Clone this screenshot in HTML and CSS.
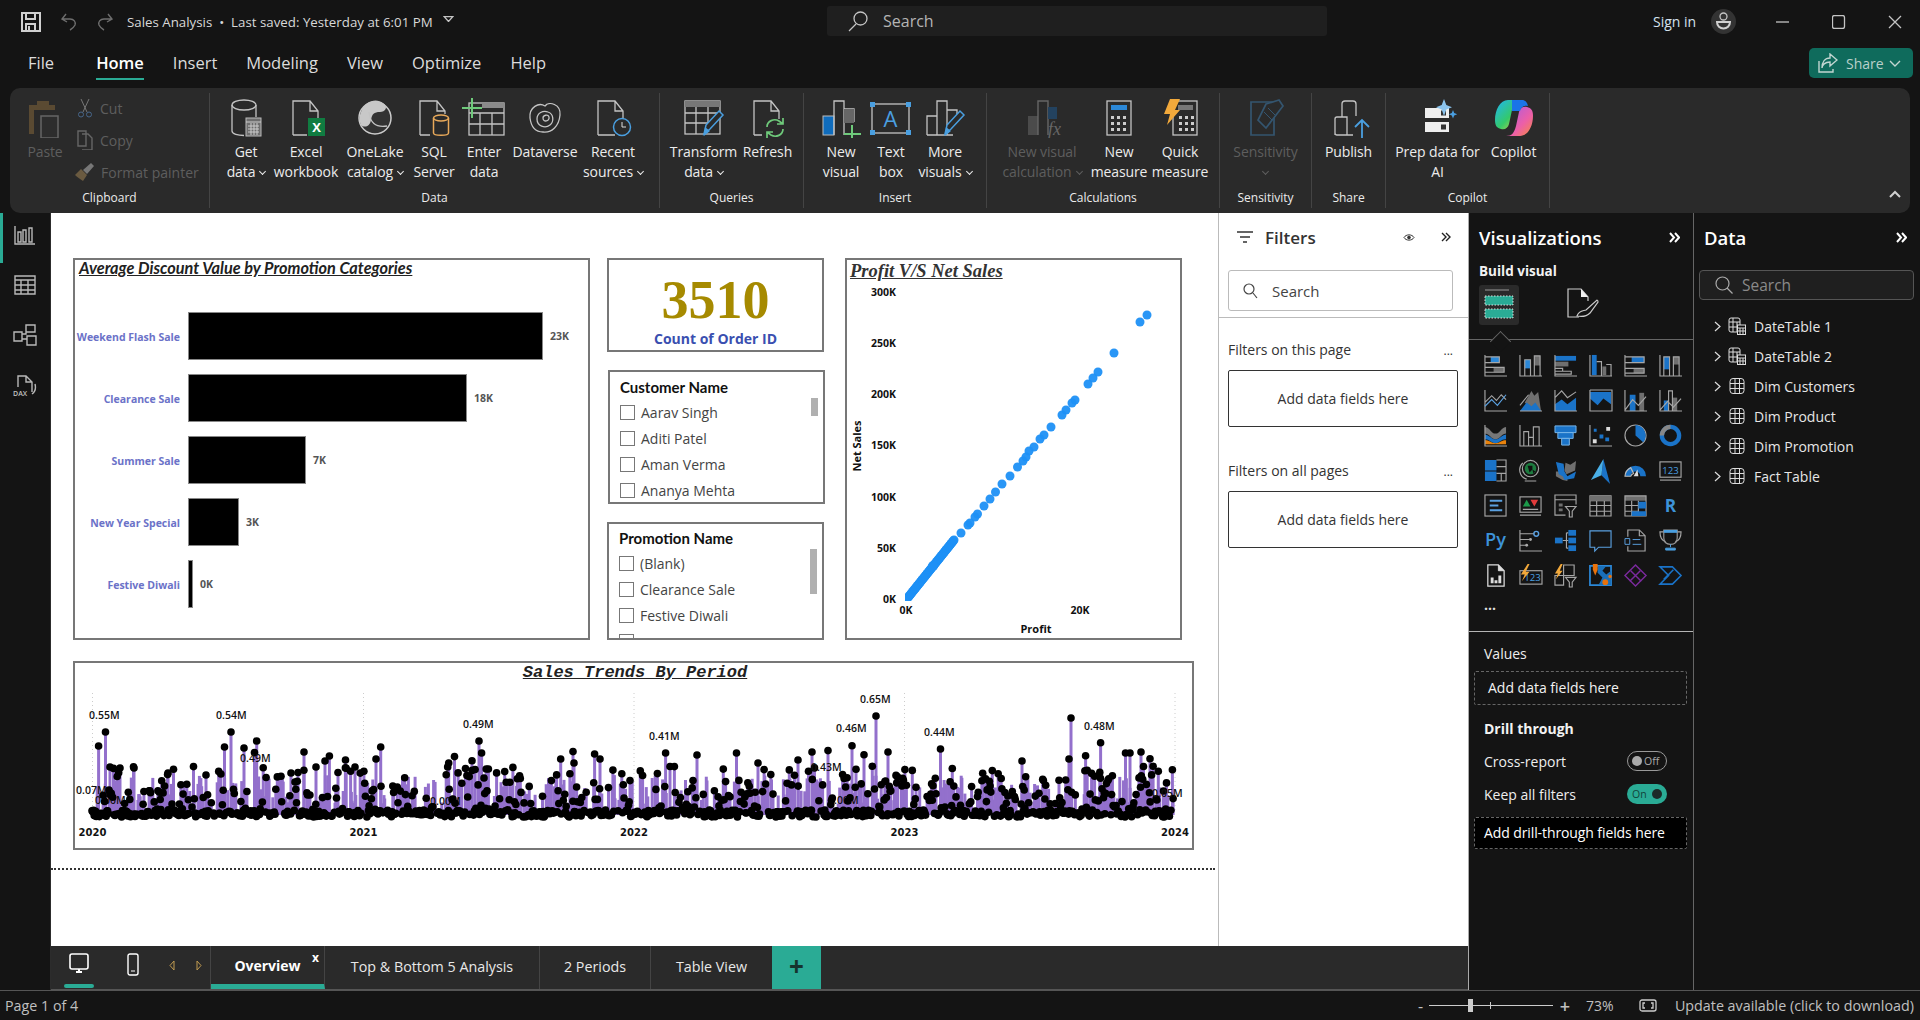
FILE: index.html
```html
<!DOCTYPE html>
<html lang="en">
<head>
<meta charset="utf-8">
<title>Sales Analysis</title>
<link rel="stylesheet" href="styles.css">
</head>
<body>
<header class="titlebar">
  <div class="title-left">
    <svg class="ti save" width="20" height="20" viewBox="0 0 20 20"><path class="s2" d="M1 1h18v18H1zM5 1v6h9V1M5 19v-7h9v7M8 14v5"/></svg>
    <svg class="ti undo" width="17" height="18" viewBox="0 0 17 18"><path class="dim" d="M6 1 2 6l5 3M2 6h8c4 0 6 3 5 6-1 2-3 4-5 5"/></svg>
    <svg class="ti redo" width="17" height="18" viewBox="0 0 17 18"><path class="dim" d="m11 1 4 5-5 3M15 6H7C3 6 1 9 2 12c1 2 3 4 5 5"/></svg>
    <span class="doc-title">Sales Analysis&nbsp; •&nbsp; Last saved: Yesterday at 6:01 PM</span>
    <svg class="ti tri" width="11" height="6" viewBox="0 0 11 6"><path class="s1" d="M1 .5h9L5.500 5.500z"/></svg>
  </div>
  <div class="top-search">
    <svg width="20" height="21" viewBox="0 0 20 21"><circle class="s1" cx="12.500" cy="7.500" r="6.500"/><path class="s1" d="M8 13 1 20"/></svg>
    <span>Search</span>
  </div>
  <div class="title-right">
    <span class="signin">Sign in</span>
    <svg class="avatar" width="25" height="25" viewBox="0 0 25 25"><circle cx="12.500" cy="12.500" r="12.500" fill="#333"/><circle class="s1" cx="12.500" cy="7.500" r="3.500"/><path class="s2" d="M6 13h13c0 4-3 6.500-6.500 6.500S6 17 6 13z"/></svg>
    <div class="winctl">
      <svg width="14" height="14" viewBox="0 0 14 14"><path class="s1" d="M0 7h13"/></svg>
      <svg width="14" height="14" viewBox="0 0 14 14"><rect class="s1" x=".5" y=".5" width="12" height="13" rx="2"/></svg>
      <svg width="14" height="14" viewBox="0 0 14 14"><path class="s1" d="m1 1 12 12M13 1 1 13"/></svg>
    </div>
  </div>
</header>

<nav class="menubar">
  <div class="menus">
    <span class="menu m-file">File</span>
    <span class="menu m-home">Home</span>
    <span class="menu">Insert</span>
    <span class="menu">Modeling</span>
    <span class="menu">View</span>
    <span class="menu">Optimize</span>
    <span class="menu">Help</span>
  </div>
  <button class="share">
    <svg width="20" height="20" viewBox="0 0 20 20"><path class="sh" d="M12 1l7 6-7 6V9C7 9 4 12 4 15c0-6 3-10 8-10zM1 8v11h14v-3"/></svg>
    <span>Share</span>
    <svg width="12" height="7" viewBox="0 0 12 7"><path class="sh" d="m1 1 5 5 5-5"/></svg>
  </button>
</nav>

<section class="ribbon">
  <div class="rgroup g-clip">
    <div class="ritems clip-items">
      <div class="ritem w-paste disabled">
        <svg width="40" height="40" viewBox="0 0 40 40"><path d="M4 7h8V3h12v4h6v5H9v24H4z" fill="#5a4a32"/><rect x="16" y="18" width="17" height="22" fill="#2d2d2d" stroke="#666" stroke-width="1.500"/></svg>
        <span class="rtext">Paste</span>
      </div>
      <ul class="clip-list">
        <li><svg width="16" height="20" viewBox="0 0 16 20"><path d="m4 1 6 13M12 1 6 14" stroke="#777" fill="none"/><circle cx="4" cy="16.500" r="2.500" fill="none" stroke="#47668a"/><circle cx="12" cy="16.500" r="2.500" fill="none" stroke="#47668a"/></svg><span>Cut</span></li>
        <li><svg width="16" height="20" viewBox="0 0 16 20"><path class="d" d="M1 1h8v15H1zM5 4h6l4 4v12H5"/></svg><span>Copy</span></li>
        <li><svg width="22" height="20" viewBox="0 0 22 20"><path d="M1 13l6-6 6 6-4 6c-3-2-6-4-8-6z" fill="#6a5a40"/><path d="m9 8 4 4 7-8-3-3z" fill="#777"/></svg><span>Format painter</span></li>
      </ul>
    </div>
    <div class="rlabel">Clipboard</div>
  </div>

  <div class="rgroup g-data">
    <div class="ritems data-items">
      <div class="ritem w56">
        <svg width="44" height="40" viewBox="0 0 44 40"><ellipse class="s" cx="20" cy="7" rx="12" ry="5"/><path class="s" d="M8 7v26c0 3 6 4.500 12 4.500M32 7v12"/><rect x="22" y="20" width="15" height="18" fill="#6e6e6e" stroke="#bbb"/><path d="M22 24h15M24 28h11M24 31h11M24 34h11M27 25v12M30 25v12M33 25v12" stroke="#ccc" fill="none"/></svg>
        <span class="rtext">Get<br>data<i class="car"></i></span>
      </div>
      <div class="ritem w64">
        <svg width="44" height="40" viewBox="0 0 44 40"><path class="s" d="M9 37V3h17l8 10v12M26 3v10h8M9 37h14"/><rect x="24" y="20" width="17" height="18" fill="#107c41"/><text x="32.500" y="34" class="xl">X</text></svg>
        <span class="rtext">Excel<br>workbook</span>
      </div>
      <div class="ritem w74">
        <svg width="44" height="40" viewBox="0 0 44 40"><circle cx="22" cy="20" r="16" fill="#333" stroke="#ccc" stroke-width="1.500"/><path d="M8 14C12 2 24 0 30 5c6 4 2 9-3 9-6 0-8 2-9 8-1 7-7 8-10 5-2-4-2-9 0-13z" fill="#c8c8c8"/><path d="M16 14c1 10 6 16 18 14" class="s"/></svg>
        <span class="rtext">OneLake<br>catalog<i class="car"></i></span>
      </div>
      <div class="ritem w44">
        <svg width="44" height="40" viewBox="0 0 44 40"><path class="s" d="M8 37V3h17l8 10v3M25 3v10h8M8 37h10"/><ellipse cx="29" cy="20" rx="7.500" ry="3" fill="none" stroke="#e8a95a" stroke-width="1.500"/><path d="M21.500 20v15c0 3 15 3 15 0V20" fill="none" stroke="#e8a95a" stroke-width="1.500"/></svg>
        <span class="rtext">SQL<br>Server</span>
      </div>
      <div class="ritem w56">
        <svg width="44" height="40" viewBox="0 0 44 40"><rect class="s" x="7" y="5" width="35" height="32"/><path class="s" d="M7 15h35M7 26h35M18 15v22M30 15v22"/><rect x="20" y="5" width="22" height="5" fill="#8a8a8a"/><path d="M0 10h20M10 0v20" stroke="#6fca7b" stroke-width="2" fill="none"/></svg>
        <span class="rtext">Enter<br>data</span>
      </div>
      <div class="ritem w66">
        <svg width="44" height="40" viewBox="0 0 44 40"><path class="s" d="M7 20C6 9 16 4 22 8c4-5 16-2 15 9-1 11-8 18-17 17-8 0-12-6-13-14z"/><path class="s" d="M14 21c0-6 6-9 11-7 6 2 6 10 2 13-5 4-13 1-13-6z"/><path class="s" d="M20 20c0-3 5-4 6-1 1 4-6 6-6 1z"/></svg>
        <span class="rtext">Dataverse</span>
      </div>
      <div class="ritem w70">
        <svg width="44" height="40" viewBox="0 0 44 40"><path class="s" d="M7 37V3h17l8 10v8M24 3v10h8M7 37h17"/><circle cx="31" cy="29" r="8.500" fill="#2a2a2a" stroke="#4a9fe0" stroke-width="1.500"/><path d="M31 24v5h4" stroke="#ddd" fill="none"/></svg>
        <span class="rtext">Recent<br>sources<i class="car"></i></span>
      </div>
    </div>
    <div class="rlabel">Data</div>
  </div>

  <div class="rgroup g-query">
    <div class="ritems">
      <div class="ritem w72">
        <svg width="44" height="40" viewBox="0 0 44 40"><rect class="s" x="3" y="3" width="35" height="33"/><rect x="3" y="3" width="35" height="6" fill="#777"/><path class="s" d="M3 15h35M3 25h24M14 9v27M26 9v20"/><path d="m22 36 2-9 13-14 4 4-13 14z" fill="#2a2a2a" stroke="#4a9fe0" stroke-width="1.500"/><path d="m22 38 1-9 5 4z" fill="#4a9fe0"/></svg>
        <span class="rtext">Transform<br>data<i class="car"></i></span>
      </div>
      <div class="ritem w56">
        <svg width="44" height="40" viewBox="0 0 44 40"><path class="s" d="M8 37V3h17l8 10v8M25 3v10h8M8 37h8"/><path d="M21 29c0-6 7-9 12-6l4 3M37 20v6h-6M37 31c0 6-7 9-12 6l-4-3M21 40v-6h6" fill="none" stroke="#6fca7b" stroke-width="1.700"/></svg>
        <span class="rtext">Refresh</span>
      </div>
    </div>
    <div class="rlabel">Queries</div>
  </div>

  <div class="rgroup g-insert">
    <div class="ritems">
      <div class="ritem w52">
        <svg width="44" height="40" viewBox="0 0 44 40"><rect x="4" y="18" width="11" height="19" fill="#0f6cbd" stroke="#bbb"/><path class="s" d="M15 37V3h10v34M25 11h10v13"/><rect x="25" y="11" width="10" height="14" fill="#666"/><path d="M25 36h17M33 27v15" stroke="#6fca7b" stroke-width="2" fill="none"/></svg>
        <span class="rtext">New<br>visual</span>
      </div>
      <div class="ritem w48">
        <svg width="44" height="40" viewBox="0 0 44 40"><rect class="s" x="3" y="6" width="37" height="29"/><text x="21.500" y="29" class="abox">A</text><path d="M1 4h5v5H1zM37 4h5v5h-5zM1 32h5v5H1zM37 32h5v5h-5z" fill="#4a9fe0"/></svg>
        <span class="rtext">Text<br>box</span>
      </div>
      <div class="ritem w60">
        <svg width="44" height="40" viewBox="0 0 44 40"><path class="s" d="M4 37V18h10M14 37V3h10v34M4 37h26M24 12h10v6"/><path d="m22 36 2-9 13-14 4 4-13 14z" fill="#2a2a2a" stroke="#4a9fe0" stroke-width="1.500"/><path d="m22 38 1-9 5 4z" fill="#4a9fe0"/></svg>
        <span class="rtext">More<br>visuals<i class="car"></i></span>
      </div>
    </div>
    <div class="rlabel">Insert</div>
  </div>

  <div class="rgroup g-calc">
    <div class="ritems">
      <div class="ritem w90 disabled">
        <svg width="44" height="40" viewBox="0 0 44 40"><rect x="8" y="18" width="10" height="19" fill="#4b4b4b"/><path class="d" d="M18 37V3h10v34"/><rect x="28" y="9" width="9" height="12" fill="#23425f"/><text x="28" y="37" class="fx">fx</text></svg>
        <span class="rtext">New visual<br>calculation<i class="car"></i></span>
      </div>
      <div class="ritem w64">
        <svg width="44" height="40" viewBox="0 0 44 40"><rect class="s" x="10" y="3" width="24" height="34"/><rect x="14" y="7" width="16" height="5" fill="#2b88d8"/><path d="M14 18h3v3h-3zM20 18h3v3h-3zM26 18h3v3h-3zM14 24h3v3h-3zM20 24h3v3h-3zM26 24h3v3h-3zM14 30h3v3h-3zM20 30h3v3h-3zM26 30h3v3h-3z" fill="#ccc"/></svg>
        <span class="rtext">New<br>measure</span>
      </div>
      <div class="ritem w58">
        <svg width="44" height="40" viewBox="0 0 44 40"><rect class="s" x="15" y="3" width="24" height="34"/><rect x="20" y="7" width="15" height="5" fill="#777"/><path d="M21 18h3v3h-3zM27 18h3v3h-3zM33 18h3v3h-3zM21 24h3v3h-3zM27 24h3v3h-3zM33 24h3v3h-3zM21 30h3v3h-3zM27 30h3v3h-3zM33 30h3v3h-3z" fill="#ccc"/><path d="M12 1h10l-5 11h5L9 27l3-11H6z" fill="#f2a93b"/></svg>
        <span class="rtext">Quick<br>measure</span>
      </div>
    </div>
    <div class="rlabel">Calculations</div>
  </div>

  <div class="rgroup g-sens">
    <div class="ritems">
      <div class="ritem wfull disabled">
        <svg width="44" height="40" viewBox="0 0 44 40"><path d="M7 4h23v33H7z" fill="none" stroke="#34556f" stroke-width="1.700"/><path d="M22 6 35 2l4 6-17 22-8-8z" fill="#2a2a2a" stroke="#34556f" stroke-width="1.700"/><path d="m20 14 8 8M24 10l8 8" stroke="#34556f" fill="none"/></svg>
        <span class="rtext">Sensitivity<br><i class="car solo"></i></span>
      </div>
    </div>
    <div class="rlabel">Sensitivity</div>
  </div>

  <div class="rgroup g-share">
    <div class="ritems">
      <div class="ritem wfull">
        <svg width="44" height="40" viewBox="0 0 44 40"><path class="s" d="M8 37V21a2 2 0 0 1 2-2h5V6a3 3 0 0 1 3-3h8a3 3 0 0 1 3 3v12M15 19h5v18H10a2 2 0 0 1-2-2M20 25v12h6"/><path d="M35 40V22M28 29l7-7 7 7" stroke="#4a9fe0" stroke-width="1.800" fill="none"/></svg>
        <span class="rtext">Publish</span>
      </div>
    </div>
    <div class="rlabel">Share</div>
  </div>

  <div class="rgroup g-copilot">
    <div class="ritems">
      <div class="ritem w-prep">
        <svg width="44" height="40" viewBox="0 0 44 40"><rect x="9" y="10" width="24" height="10" fill="#eee"/><rect x="25" y="12.500" width="5" height="5" fill="#333"/><rect x="9" y="24" width="24" height="10" fill="#eee"/><rect x="25" y="26.500" width="5" height="5" fill="#333"/><path d="m28 1 2.300 6L36 9.300l-5.700 2.300L28 18l-2.300-6.400L20 9.300 25.700 7z" fill="#8bc4ee"/><path d="m37 12 1.200 3 3 1.200-3 1.200-1.200 3-1.200-3-3-1.200 3-1.200z" fill="#4a9fe0"/></svg>
        <span class="rtext">Prep data for<br>AI</span>
      </div>
      <div class="ritem w-copilot">
        <svg width="44" height="40" viewBox="0 0 44 40">
          <defs>
            <linearGradient id="cpa" x1="0" y1="0" x2="1" y2="1"><stop offset="0" stop-color="#1fb6f6"/><stop offset=".55" stop-color="#34c96a"/><stop offset="1" stop-color="#f2d23a"/></linearGradient>
            <linearGradient id="cpb" x1="0" y1="0" x2="1" y2="1"><stop offset="0" stop-color="#a35be8"/><stop offset=".6" stop-color="#ec5fa8"/><stop offset="1" stop-color="#f7893f"/></linearGradient>
          </defs>
          <path d="M16 2h14c-6 0-8 3-10 10l-3 14c-1 4-4 6-8 5-4-1-6-3-6-9C3 12 8 2 16 2z" fill="url(#cpa)"/>
          <path d="M28 38H14c6 0 8-3 10-10l3-14c1-4 4-6 8-5 4 1 6 3 6 9 0 10-5 20-13 20z" fill="url(#cpb)"/>
          <path d="M20 2h10c3 0 5 2 6 6-4-1-7 1-8 5h-8c0-5 0-8 0-11z" fill="#1a74e8"/>
        </svg>
        <span class="rtext">Copilot</span>
      </div>
    </div>
    <div class="rlabel">Copilot</div>
  </div>
  <svg class="collapse" width="12" height="8" viewBox="0 0 12 8"><path class="s2" d="m1 7 5-5 5 5"/></svg>
</section>

<main class="workspace">
  <aside class="rail">
    <svg width="22" height="20" viewBox="0 0 22 20"><path class="rs" d="M1 0v18h20M4 6h3v10H4zM9 4h3v12H9zM15 2h3v14h-3z"/></svg>
    <svg width="22" height="20" viewBox="0 0 22 20"><path class="rs" d="M1 1h20v18H1zM1 5h20M1 10h20M1 15h20M7 5v14M14 5v14"/></svg>
    <svg width="24" height="22" viewBox="0 0 24 22"><path class="rs" d="M1 8h8v9H1zM13 1h9v7h-9zM14 12h9v9h-9zM9 10h4V4M9 15h5"/></svg>
    <svg width="24" height="22" viewBox="0 0 24 22"><path class="rs" d="M5 12V1h8l6 6v10M13 1v6h6M22 9c1 4 0 8-3 10"/><text x="0" y="21" class="dax">DAX</text></svg>
  </aside>

  <div class="center">
    <div class="center-top">
      <div class="canvas">
        <div class="row-top">
          <article class="card bars">
            <h3 class="t-bars">Average Discount Value by Promotion Categories</h3>
            <div class="barlist">
              <div class="barrow"><span class="blabel">Weekend Flash Sale</span><span class="bar" style="width:355px"></span><span class="bval">23K</span></div>
              <div class="barrow"><span class="blabel">Clearance Sale</span><span class="bar" style="width:279px"></span><span class="bval">18K</span></div>
              <div class="barrow"><span class="blabel">Summer Sale</span><span class="bar" style="width:118px"></span><span class="bval">7K</span></div>
              <div class="barrow"><span class="blabel">New Year Special</span><span class="bar" style="width:51px"></span><span class="bval">3K</span></div>
              <div class="barrow"><span class="blabel">Festive Diwali</span><span class="bar" style="width:5px"></span><span class="bval">0K</span></div>
            </div>
          </article>
          <div class="midcol">
            <article class="card kpi">
              <div class="kpi-num">3510</div>
              <div class="kpi-label">Count of Order ID</div>
            </article>
            <article class="card slicer s-cust">
              <h4>Customer Name</h4>
              <ul>
                <li><i class="cb"></i>Aarav Singh</li>
                <li><i class="cb"></i>Aditi Patel</li>
                <li><i class="cb"></i>Aman Verma</li>
                <li><i class="cb"></i>Ananya Mehta</li>
              </ul>
              <span class="thumb th-cust"></span>
            </article>
            <article class="card slicer s-promo">
              <h4>Promotion Name</h4>
              <ul>
                <li><i class="cb"></i>(Blank)</li>
                <li><i class="cb"></i>Clearance Sale</li>
                <li><i class="cb"></i>Festive Diwali</li>
                <li><i class="cb"></i></li>
              </ul>
              <span class="thumb th-promo"></span>
            </article>
          </div>
          <article class="card scatter">
            <h3 class="t-scatter">Profit V/S Net Sales</h3>
            <svg class="chart" width="333" height="356" viewBox="847 282 333 356">
              <defs><clipPath id="plot"><rect x="905" y="290" width="270" height="311"/></clipPath></defs>
              <g class="axis">
                <text x="896" y="296" text-anchor="end">300K</text>
                <text x="896" y="347" text-anchor="end">250K</text>
                <text x="896" y="398" text-anchor="end">200K</text>
                <text x="896" y="449" text-anchor="end">150K</text>
                <text x="896" y="501" text-anchor="end">100K</text>
                <text x="896" y="552" text-anchor="end">50K</text>
                <text x="896" y="603" text-anchor="end">0K</text>
                <text x="906" y="614" text-anchor="middle">0K</text>
                <text x="1080" y="614" text-anchor="middle">20K</text>
              </g>
              <text class="axt" x="1036" y="633" text-anchor="middle">Profit</text>
              <text class="axt" transform="translate(861 446) rotate(-90)" text-anchor="middle">Net Sales</text>
              <g id="scatter-dots" class="sdots" clip-path="url(#plot)"></g>
            </svg>
          </article>
        </div>
        <article class="card trend">
          <h3 class="t-trend">Sales Trends By Period</h3>
          <svg class="chart" width="1117" height="163" viewBox="75 685 1117 163">
            <g class="grid">
              <path d="M92.500 693V812M363.500 693V812M634 693V812M904.500 693V812M1175 693V812"/>
            </g>
            <g id="trend-stems" class="stems"></g>
            <g class="tlabels">
              <text x="76" y="794">0.07M</text>
              <text x="95" y="804">0.00M</text>
              <text x="430" y="805">0.00M</text>
              <text x="828" y="804">0.00M</text>
            </g>
            <g id="trend-dots"></g>
            <g class="tlabels">
              <text x="89" y="719">0.55M</text>
              <text x="216" y="719">0.54M</text>
              <text x="240" y="762">0.49M</text>
              <text x="463" y="728">0.49M</text>
              <text x="649" y="740">0.41M</text>
              <text x="836" y="732">0.46M</text>
              <text x="860" y="703">0.65M</text>
              <text x="811" y="771">0.43M</text>
              <text x="924" y="736">0.44M</text>
              <text x="1084" y="730">0.48M</text>
              <text x="1152" y="797">0.05M</text>
            </g>
            <g class="years">
              <text x="92.500" y="836" text-anchor="middle">2020</text>
              <text x="363.500" y="836" text-anchor="middle">2021</text>
              <text x="634" y="836" text-anchor="middle">2022</text>
              <text x="904.500" y="836" text-anchor="middle">2023</text>
              <text x="1175" y="836" text-anchor="middle">2024</text>
            </g>
          </svg>
        </article>
        <div class="pageline"></div>
      </div>

      <aside class="filters">
        <div class="f-head">
          <svg width="16" height="12" viewBox="0 0 16 12"><path d="M0 1h16M3 6h10M6 11h4" stroke="#333" stroke-width="1.500" fill="none"/></svg>
          <span class="f-title">Filters</span>
          <svg class="f-eye" width="12" height="9" viewBox="0 0 12 9"><path d="M1 4.500C3 1 9 1 11 4.500 9 8 3 8 1 4.500z" fill="none" stroke="#333"/><circle cx="6" cy="4.500" r="1.800" fill="#333"/></svg>
          <svg class="f-chev" width="10" height="10" viewBox="0 0 10 10"><path d="m1 1 4 4-4 4M5 1l4 4-4 4" fill="none" stroke="#222" stroke-width="1.400"/></svg>
        </div>
        <div class="f-search">
          <svg width="15" height="16" viewBox="0 0 15 16"><circle cx="6" cy="6" r="5" fill="none" stroke="#444" stroke-width="1.200"/><path d="m10 10 4 5" stroke="#444" stroke-width="1.200"/></svg>
          <span>Search</span>
        </div>
        <div class="f-section">
          <div class="f-row"><span>Filters on this page</span><span class="more">...</span></div>
          <div class="f-drop">Add data fields here</div>
          <div class="f-row f-row2"><span>Filters on all pages</span><span class="more">...</span></div>
          <div class="f-drop">Add data fields here</div>
        </div>
      </aside>
    </div>

    <div class="tabs">
      <div class="tab-tools">
        <div class="device on">
          <svg width="20" height="21" viewBox="0 0 20 21"><rect x="1" y="1" width="18" height="15" rx="2" fill="none" stroke="#fff" stroke-width="1.600"/><path d="M7 19h6M10 16v3" stroke="#fff" stroke-width="2" fill="none"/></svg>
        </div>
        <div class="device">
          <svg width="12" height="23" viewBox="0 0 12 23"><rect x="1" y="1" width="10" height="21" rx="2" fill="none" stroke="#fff" stroke-width="1.400"/><path d="M4 18h4" stroke="#fff"/></svg>
        </div>
        <svg class="nav-arrow" width="6" height="11" viewBox="0 0 6 11"><path d="M5 1 1 5.500 5 10z" fill="none" stroke="#c09a50"/></svg>
        <svg class="nav-arrow" width="6" height="11" viewBox="0 0 6 11"><path d="M1 1 5 5.500 1 10z" fill="none" stroke="#c09a50"/></svg>
      </div>
      <div class="tab active">Overview<span class="tab-x">x</span></div>
      <div class="tab t-top">Top &amp; Bottom 5 Analysis</div>
      <div class="tab t-per">2 Periods</div>
      <div class="tab t-tbl">Table View</div>
      <div class="tab-add">+</div>
    </div>
  </div>

  <aside class="viz">
    <div class="p-head"><span class="p-title">Visualizations</span><span class="dchev"><svg width="11" height="11" viewBox="0 0 11 11"><path class="s2w" d="m1 1 4 4.500-4 4.500M6 1l4 4.500-4 4.500"/></svg></span></div>
    <div class="build">Build visual</div>
    <div class="build-tabs">
      <div class="bt on">
        <svg width="30" height="32" viewBox="0 0 30 32"><path d="M1 1h24" stroke="#999" fill="none"/><rect x="1" y="7" width="28" height="9" fill="#2aab95" stroke="#ddd" stroke-dasharray="1.500 1.500"/><rect x="1" y="20" width="28" height="9" fill="#2aab95" stroke="#ddd" stroke-dasharray="1.500 1.500"/></svg>
      </div>
      <svg class="bt2" width="32" height="30" viewBox="0 0 32 30"><path d="M12 29H1V1h13l7 8v4" fill="none" stroke="#ccc" stroke-width="1.200"/><path d="M14 1v8h7z" fill="#eee"/><path d="M10 28c2-6 6-5 9-6L30 12c1 0 1 1 1 2l-8 11c-3 3-8 4-13 3z" fill="none" stroke="#ccc" stroke-width="1.200"/></svg>
    </div>
    <div class="notch"></div>
    <div class="vgrid">
      <svg viewBox="0 0 24 24"><rect class="b" x="7" y="3" width="9" height="6"/><rect class="f" x="10" y="14" width="11" height="5"/><path class="g" d="M1 1v22h23M1 3h15v6H1M1 14h20v5H1"/></svg>
      <svg viewBox="0 0 24 24"><rect class="b" x="6" y="6" width="6" height="9"/><rect class="f" x="16" y="2" width="6" height="10"/><path class="g" d="M1 1v22h23M6 23V6h6v17M16 23V2h6v21"/></svg>
      <svg viewBox="0 0 24 24"><rect class="bl" x="1" y="2" width="22" height="5"/><rect class="f" x="1" y="8" width="14" height="5"/><path class="g" d="M1 1v22h23M1 15h8v3M1 18h17v3H1"/></svg>
      <svg viewBox="0 0 24 24"><rect class="bl" x="3" y="1" width="5" height="21"/><rect class="f" x="14" y="13" width="4" height="9"/><path class="g" d="M1 1v22h23M8 8h5v15M18 11h5v12"/></svg>
      <svg viewBox="0 0 24 24"><rect class="bl" x="8" y="3" width="13" height="6"/><rect class="f" x="10" y="15" width="11" height="5"/><path class="g" d="M1 1v22h23M1 3h20v6H1M1 15h20v5H1"/></svg>
      <svg viewBox="0 0 24 24"><rect class="bl" x="5" y="3" width="6" height="13"/><rect class="f" x="15" y="3" width="6" height="8"/><path class="g" d="M1 1v22h23M5 23V3h6v20M15 23V3h6v20"/></svg>

      <svg viewBox="0 0 24 24"><path class="g" d="M1 1v22h23M1 14l7-7 5 5 5-6 5 5"/><path class="l" d="M1 18l7-7 6 6 9-11"/></svg>
      <svg viewBox="0 0 24 24"><path class="f" d="m6 14 7-12 3 5 4-4 3 20H14z"/><path class="bl" d="M1 23l7-9 5 4 4-4 6 9z"/><path class="g" d="M1 17 10 6M1 23h23"/></svg>
      <svg viewBox="0 0 24 24"><path class="bl" d="m1 16 7-5 6 5 9-7v14H1z"/><path class="g" d="M1 1v22h23M1 9l7-7 6 7 9-6"/></svg>
      <svg viewBox="0 0 24 24"><path class="bl" d="M1 3h22v13l-8-6-6 7-8-7z"/><path class="g" d="M1 1v22h23V1H1"/></svg>
      <svg viewBox="0 0 24 24"><rect class="bl" x="6" y="6" width="6" height="17"/><rect class="f" x="16" y="4" width="5" height="19"/><path class="g" d="M1 1v22h23M1 22 9 11l6 6 8-9"/></svg>
      <svg viewBox="0 0 24 24"><rect class="bl" x="5" y="12" width="5" height="11"/><rect class="f" x="14" y="9" width="5" height="14"/><path class="g" d="M1 1v22h23M10 23V2h4v21M1 22 9 13l6 6 8-9"/></svg>

      <svg viewBox="0 0 24 24"><path d="M1 3c6 1 6 7 11 7s5-6 11-7v7c-6 1-6 6-11 6S7 11 1 10z" fill="#777"/><path d="M1 11c6 1 6 5 11 5s5-4 11-5v5c-6 0-6 4-11 4s-6-4-11-4z" fill="#1a73c8"/><path d="M1 17c6 0 6 3 11 3s5-3 11-3v4H1z" fill="#e8820c"/><path class="g" d="M1 1v22h23"/></svg>
      <svg viewBox="0 0 24 24"><path class="g" d="M1 1v22h23M5 23V8h5v15M10 14h5V5M15 23V3h6v20"/></svg>
      <svg viewBox="0 0 24 24"><path d="M1 2h22v7H1z" fill="#1a73c8" stroke="#7bb8ea"/><path d="M4 9h16v6H4z" fill="#1a73c8" stroke="#7bb8ea"/><path d="M8 15h8v7H8z" fill="#1a73c8" stroke="#7bb8ea"/></svg>
      <svg viewBox="0 0 24 24"><path class="g" d="M1 1v22h23"/><path class="bl" d="M5 5h3v3H5zM11 11h4v4h-4zM17 14h4v4h-4z"/><path d="M18 3h4v4h-4zM4 16h4v4H4z" fill="#ddd"/></svg>
      <svg viewBox="0 0 24 24"><circle class="g" cx="12" cy="12" r="11"/><path class="bl" d="M12 1a11 11 0 0 1 8 18l-8-7z"/></svg>
      <svg viewBox="0 0 24 24"><circle cx="12" cy="12" r="9" fill="none" stroke="#1a73c8" stroke-width="4.500"/><path d="M12 3a9 9 0 0 0-9 9" fill="none" stroke="#888" stroke-width="4.500"/></svg>

      <svg viewBox="0 0 24 24"><path class="bl" d="M1 1h12v11H1zM1 13h12v10H1z"/><path class="g" d="M13 1h10v22H13M13 8h10M13 15h10M18 15v8"/></svg>
      <svg viewBox="0 0 24 24"><circle class="g" cx="12" cy="10" r="8.500"/><circle cx="12" cy="10" r="6" fill="#1c7a3e"/><path d="M9 7h5v4l-3 3zM14 11l3 2-2 2z" fill="#111"/><path class="g" d="M4 4a10 10 0 0 0 4 17M6 23h12"/></svg>
      <svg viewBox="0 0 24 24"><path class="f" d="M2 13 9 13l2 6 3-1v5l-5-1-7-4z"/><path class="bl" d="M2 3l8 2 1 8 3 5 9-5-2 7-10 2-2-4-4-2z"/><path class="f" d="M12 4l5 2 6-4-1 10-9 4-2-4z"/></svg>
      <svg viewBox="0 0 24 24"><path d="M15 0 22 26 13 17z" fill="#1a73c8"/><path d="M15 0 2 22l11-5z" fill="#4ab0e8"/></svg>
      <svg viewBox="0 0 24 24"><path class="bl" d="M1 18a11 11 0 0 1 22 0h-6a5 5 0 0 0-10 0z"/><path d="M1 18a11 11 0 0 1 6-9l3 6a5 5 0 0 0-3 3z" fill="none" stroke="#bbb" stroke-width="1.200"/><path d="m10 18 4-7 1 7z" fill="#ddd"/></svg>
      <svg viewBox="0 0 24 24"><rect class="g" x="1" y="3" width="22" height="16"/><text x="12" y="15.500" class="v123">123</text><path class="g" d="M1 22h22"/></svg>

      <svg viewBox="0 0 24 24"><rect class="g" x="1" y="1" width="22" height="22"/><path d="M6 7h13M6 12h9M6 17h13" stroke="#5aa0e0" stroke-width="2" fill="none"/></svg>
      <svg viewBox="0 0 24 24"><rect class="g" x="1" y="3" width="22" height="16"/><path d="M8 6l4 7H4z" fill="#1c9a4a"/><path d="M12 6h8l-4 7z" fill="#e23b3b"/><path class="g" d="M4 16h16M1 22h22"/></svg>
      <svg viewBox="0 0 24 24"><path class="g" d="M12 22H1V1h22v10M1 6h22"/><path class="f" d="M5 10h4v3H5zM5 15h4v3H5z"/><path class="g" d="M12 13h11l-4 5v6h-3v-6z"/></svg>
      <svg viewBox="0 0 24 24"><path class="g" d="M1 2h22v21H1zM1 7h22M1 12h22M1 18h22M8 7v16M16 7v16"/><rect class="f" x="1" y="2" width="22" height="5"/></svg>
      <svg viewBox="0 0 24 24"><rect class="f" x="1" y="2" width="22" height="5"/><path class="g" d="M1 2h22v21H1zM8 7v16M15 7v16M1 12h14M1 18h14"/><path class="bl" d="M15 8h8v7h-8zM8 18h15v5H8z"/></svg>
      <svg viewBox="0 0 24 24"><text x="12" y="19" class="vr">R</text></svg>

      <svg viewBox="0 0 24 24"><text x="12" y="18" class="vpy">Py</text></svg>
      <svg viewBox="0 0 24 24"><path class="g" d="M1 1v22h23M1 5h15M1 11h10M1 17h6"/><circle cx="18" cy="5" r="2.500" fill="none" stroke="#5aa0e0" stroke-width="1.500"/><circle cx="12" cy="11" r="1.500" fill="#aaa"/><circle cx="8" cy="17" r="1.500" fill="#aaa"/></svg>
      <svg viewBox="0 0 24 24"><path class="g" d="M9 12h4M13 4v16M13 4h2M13 12h2M13 20h2"/><rect class="bl" x="1" y="9" width="8" height="6"/><rect class="bl" x="15" y="1" width="8" height="6"/><rect class="bl" x="15" y="9" width="8" height="6"/><rect class="bl" x="15" y="17" width="8" height="6"/></svg>
      <svg viewBox="0 0 24 24"><path d="M1 2h22v17H10l-4 4v-4H1z" fill="none" stroke="#5aa0e0" stroke-width="1.200"/></svg>
      <svg viewBox="0 0 24 24"><path class="g" d="M4 8V1h12l6 6v16H4v-5M16 1v6h6"/><path d="M1 10h5v6H1z" fill="none" stroke="#5aa0e0"/><path d="M9 11h8M9 16h9" stroke="#5aa0e0" fill="none"/></svg>
      <svg viewBox="0 0 24 24"><path class="g" d="M5 3H1c0 6 2 9 6 10M19 3h4c0 6-2 9-6 10"/><path d="M5 1h14v8c0 5-3 7-7 7s-7-2-7-7z" fill="none" stroke="#999" stroke-width="1.200"/><rect x="5" y="1" width="14" height="3" fill="#4a9fe0"/><path d="M12 16v3M7 22h10v-2H7z" stroke="#4a9fe0" fill="#4a9fe0"/></svg>

      <svg viewBox="0 0 24 24"><path d="M4 23V1h11l6 6v16z" fill="none" stroke="#ddd" stroke-width="1.300"/><path d="M15 1v6h6" fill="#ddd" stroke="#ddd"/><path d="M7 14h3v6H7zM11 17h3v3h-3zM15 12h3v8h-3z" fill="#ddd"/></svg>
      <svg viewBox="0 0 24 24"><rect class="g" x="1" y="7" width="23" height="14"/><text x="14" y="18" class="v123">123</text><path d="M9 0 2 11h4l-3 7 8-10H7l4-8z" fill="#f2a93b"/></svg>
      <svg viewBox="0 0 24 24"><path class="g" d="M10 1h11v11H10zM1 12h9v10H1zM10 1v11"/><path class="g" d="M12 14h11l-4 5v5h-3v-5z"/><path d="M7 0 1 10h3l-2 6 7-9H6l3-7z" fill="#f2a93b"/></svg>
      <svg viewBox="0 0 24 24"><path d="M1 2h22v20H1z" fill="none" stroke="#2b88d8" stroke-width="1.800"/><path d="M9 2h9l-4 5 4 4 5-4v15H10l4-8-5-5z" fill="#1a6fb8"/><path d="M4 0h5v6l-2.500 6L4 6z" fill="#e8720c"/><circle cx="17" cy="19" r="3" fill="#e8720c"/><circle cx="22" cy="13" r="1.800" fill="#e8720c"/></svg>
      <svg viewBox="0 0 24 24"><path d="M12 1l11 11-11 11L1 12z" fill="none" stroke="#7a2a9c" stroke-width="1.500"/><path d="M7 7l11 11M17 7 6 18" fill="none" stroke="#7a2a9c" stroke-width="1.500"/></svg>
      <svg viewBox="0 0 24 24"><path d="M1 3h13l9 9-9 9H1l9-9z" fill="none" stroke="#1a73c8" stroke-width="1.600"/><path d="M5 16 15 6" stroke="#1a73c8" stroke-width="1.600" fill="none"/></svg>
    </div>
    <div class="vmore">...</div>
    <div class="wells">
      <div class="w-label">Values</div>
      <div class="well">Add data fields here</div>
      <div class="w-bold">Drill through</div>
      <div class="w-row"><span>Cross-report</span><span class="toggle off"><i></i>Off</span></div>
      <div class="w-row w-row2"><span>Keep all filters</span><span class="toggle on">On<i></i></span></div>
      <div class="well well-black">Add drill-through fields here</div>
    </div>
  </aside>

  <aside class="data">
    <div class="p-head"><span class="p-title">Data</span><span class="dchev"><svg width="11" height="11" viewBox="0 0 11 11"><path class="s2w" d="m1 1 4 4.500-4 4.500M6 1l4 4.500-4 4.500"/></svg></span></div>
    <div class="d-search">
      <svg width="18" height="18" viewBox="0 0 18 18"><circle cx="7.500" cy="7.500" r="6.500" fill="none" stroke="#aaa" stroke-width="1.200"/><path d="m12 12 5.500 5.500" stroke="#aaa" stroke-width="1.200"/></svg>
      <span>Search</span>
    </div>
    <ul class="tree">
      <li><svg class="tc" width="7" height="11" viewBox="0 0 7 11"><path d="m1 1 5 4.500L1 10" fill="none" stroke="#ddd" stroke-width="1.200"/></svg><svg width="18" height="18" viewBox="0 0 18 18"><path class="ts" d="M12 11V3a2 2 0 0 0-2-2H3a2 2 0 0 0-2 2v10a2 2 0 0 0 2 2h6M1 5h11M1 10h8M5 1v14M9 5v10"/><rect x="9.500" y="8" width="8" height="9.500" fill="#111" stroke="#ddd"/><path d="M9.500 11h8M9.500 14h8M12 11v6M15 11v6" stroke="#ddd"/></svg><span>DateTable 1</span></li>
      <li><svg class="tc" width="7" height="11" viewBox="0 0 7 11"><path d="m1 1 5 4.500L1 10" fill="none" stroke="#ddd" stroke-width="1.200"/></svg><svg width="18" height="18" viewBox="0 0 18 18"><path class="ts" d="M12 11V3a2 2 0 0 0-2-2H3a2 2 0 0 0-2 2v10a2 2 0 0 0 2 2h6M1 5h11M1 10h8M5 1v14M9 5v10"/><rect x="9.500" y="8" width="8" height="9.500" fill="#111" stroke="#ddd"/><path d="M9.500 11h8M9.500 14h8M12 11v6M15 11v6" stroke="#ddd"/></svg><span>DateTable 2</span></li>
      <li><svg class="tc" width="7" height="11" viewBox="0 0 7 11"><path d="m1 1 5 4.500L1 10" fill="none" stroke="#ddd" stroke-width="1.200"/></svg><svg width="18" height="18" viewBox="0 0 18 18"><rect class="ts" x="2" y="1.500" width="14" height="15" rx="3"/><path class="ts" d="M2 6.500h14M2 11.500h14M7 1.500v15M11.500 1.500v15"/></svg><span>Dim Customers</span></li>
      <li><svg class="tc" width="7" height="11" viewBox="0 0 7 11"><path d="m1 1 5 4.500L1 10" fill="none" stroke="#ddd" stroke-width="1.200"/></svg><svg width="18" height="18" viewBox="0 0 18 18"><rect class="ts" x="2" y="1.500" width="14" height="15" rx="3"/><path class="ts" d="M2 6.500h14M2 11.500h14M7 1.500v15M11.500 1.500v15"/></svg><span>Dim Product</span></li>
      <li><svg class="tc" width="7" height="11" viewBox="0 0 7 11"><path d="m1 1 5 4.500L1 10" fill="none" stroke="#ddd" stroke-width="1.200"/></svg><svg width="18" height="18" viewBox="0 0 18 18"><rect class="ts" x="2" y="1.500" width="14" height="15" rx="3"/><path class="ts" d="M2 6.500h14M2 11.500h14M7 1.500v15M11.500 1.500v15"/></svg><span>Dim Promotion</span></li>
      <li><svg class="tc" width="7" height="11" viewBox="0 0 7 11"><path d="m1 1 5 4.500L1 10" fill="none" stroke="#ddd" stroke-width="1.200"/></svg><svg width="18" height="18" viewBox="0 0 18 18"><rect class="ts" x="2" y="1.500" width="14" height="15" rx="3"/><path class="ts" d="M2 6.500h14M2 11.500h14M7 1.500v15M11.500 1.500v15"/></svg><span>Fact Table</span></li>
    </ul>
  </aside>
</main>

<footer class="status">
  <span class="page-of">Page 1 of 4</span>
  <div class="status-right">
    <span class="zm">-</span>
    <div class="slider"><i class="sl-thumb"></i><i class="sl-tick"></i></div>
    <span class="zp">+</span>
    <span class="zpct">73%</span>
    <svg class="fit" width="18" height="13" viewBox="0 0 18 13"><rect x="1" y="1" width="16" height="11" rx="2" fill="none" stroke="#ccc" stroke-width="1.300"/><path d="M6 4H4v5h2M12 4h2v5h-2" fill="none" stroke="#ccc" stroke-width="1.300"/></svg>
    <span class="update">Update available (click to download)</span>
  </div>
</footer>
<script src="chart.js"></script>
</body>
</html>
```

FILE: styles.css
```css
* { box-sizing: border-box; }
html, body { margin: 0; height: 100%; }
body {
  width: 1920px; height: 1020px; overflow: hidden;
  display: flex; flex-direction: column;
  background: #141414; color: #e6e6e6;
  font-family: "Open Sans", "Noto Sans", sans-serif; font-size: 14px;
}
ul { list-style: none; margin: 0; padding: 0; }
h3, h4 { margin: 0; }
svg { display: block; flex: none; }
.s, .s1 { fill: none; stroke: #c4c4c4; stroke-width: 1.300; }
.s2 { fill: none; stroke: #d0d0d0; stroke-width: 2; }
.s2w { fill: none; stroke: #fff; stroke-width: 2; }
.dim { fill: none; stroke: #6e6e6e; stroke-width: 1.400; }
.d { fill: none; stroke: #666; stroke-width: 1.400; }
.sh { fill: none; stroke: #c2d6d1; stroke-width: 1.400; }

/* title bar */
.titlebar { height: 44px; display: grid; grid-template-columns: 827px 500px 1fr; align-items: start; flex: none; }
.title-left { display: flex; align-items: center; padding: 12px 0 0 21px; height: 32px; }
.undo { margin-left: 19px; }
.redo { margin-left: 20px; }
.doc-title { margin-left: 13px; color: #d8d8d8; white-space: nowrap; font-size: 13.300px; }
.tri { margin: -6px 0 0 10px; }
.top-search { margin-top: 6px; height: 30px; background: #1f1f1f; border-radius: 3px; display: flex; align-items: center; gap: 15px; padding-left: 21px; color: #b4b4b4; font-size: 16px; }
.title-right { display: flex; align-items: center; padding: 9px 0 0 326px; }
.signin { color: #d5e2ef; width: 58px; white-space: nowrap; }
.winctl { display: flex; gap: 42px; margin-left: 40px; align-items: center; }

/* menu */
.menubar { height: 44px; display: flex; flex: none; justify-content: space-between; padding: 0 7px 0 28px; }
.menus { display: flex; gap: 29px; font-size: 16.500px; color: #dcdcdc; }
.menu { height: 36px; line-height: 37px; }
.m-file { margin-right: 13px; }
.m-home { color: #fff; font-weight: 600; border-bottom: 2px solid #2aab95; }
.share { margin-top: 4px; height: 30px; width: 104px; background: #0f6b5c; border: 0; border-radius: 5px; display: flex; align-items: center; padding: 0 0 0 9px; color: #b9d0ca; font: 14px "Open Sans", sans-serif; }
.share span { margin: 0 5px 0 8px; }

/* ribbon */
.ribbon { position: relative; flex: none; margin: 0 10px; height: 125px; background: #2a2a2a; border-radius: 10px; display: flex; padding: 5px 0; }
.rgroup { display: flex; flex-direction: column; border-right: 1px solid #444; }
.g-clip { width: 200px; }
.g-data { width: 450px; }
.g-query { width: 144px; }
.g-insert { width: 183px; }
.g-calc { width: 233px; }
.g-sens { width: 92px; }
.g-share { width: 74px; }
.g-copilot { width: 164px; }
.ritems { height: 95px; flex: none; display: flex; justify-content: center; padding-top: 5px; }
.data-items { justify-content: flex-start; padding-left: 8px; }
.ritem { display: flex; flex-direction: column; align-items: center; flex: none; }
.rtext { text-align: center; line-height: 20px; margin-top: 4px; white-space: nowrap; color: #ececec; letter-spacing: -.1px; }
.rlabel { text-align: center; font-size: 12px; height: 20px; line-height: 20px; color: #ececec; }
.disabled .rtext { color: #5e5e5e; }
.car { display: inline-block; width: 5px; height: 5px; border: solid currentColor; border-width: 0 1px 1px 0; transform: rotate(45deg); margin: 0 0 3px 5px; }
.car.solo { margin-left: 0; }
.w44 { width: 44px; } .w48 { width: 48px; } .w52 { width: 52px; } .w56 { width: 56px; } .w58 { width: 58px; } .w60 { width: 60px; }
.w64 { width: 64px; } .w66 { width: 66px; } .w70 { width: 70px; } .w72 { width: 72px; } .w74 { width: 74px; } .w90 { width: 90px; }
.wfull { width: 100%; }
.w-prep { width: 92px; } .w-copilot { width: 60px; }
.clip-items { justify-content: flex-start; padding-left: 12px; }
.w-paste { width: 46px; }
.clip-list { margin: -6px 0 0 9px; display: flex; flex-direction: column; color: #5e5e5e; }
.clip-list li { height: 33px; display: flex; align-items: center; gap: 7px; white-space: nowrap; }
.clip-list li:last-child { margin-left: -3px; gap: 5px; }
.clip-list svg { width: 16px; }
.clip-list li:last-child svg { width: 22px; }
.collapse { position: absolute; right: 9px; bottom: 15px; }
.xl { fill: #fff; font: 700 13px "Open Sans", sans-serif; text-anchor: middle; }
.abox { fill: #4a9fe0; font: 400 22px "Open Sans", sans-serif; text-anchor: middle; }
.fx { fill: #666; font: italic 18px "Liberation Serif", serif; }

/* workspace */
.workspace { flex: none; height: 777px; display: flex; }
.rail { width: 51px; flex: none; border-right: 1px solid #2c2c2c; display: flex; flex-direction: column; align-items: center; gap: 29px; padding-top: 13px; position: relative; }
.rail::before { content: ""; position: absolute; left: 0; top: 0; width: 3px; height: 50px; background: #2aab95; }
.rs { fill: none; stroke: #b8b8b8; stroke-width: 1.400; }
.dax { fill: #c0c0c0; font: 600 7px "Open Sans", sans-serif; }
.center { width: 1417px; flex: none; display: flex; flex-direction: column; }
.center-top { flex: 1; display: flex; min-height: 0; }

/* canvas */
.canvas { width: 1167px; flex: none; background: #fff; padding: 45px 0 0 22px; color: #222; }
.row-top { display: flex; height: 382px; }
.card { border: 2px solid #777; background: #fff; position: relative; }
.bars { width: 517px; margin-right: 17px; }
.midcol { width: 217px; margin-right: 21px; display: flex; flex-direction: column; gap: 18px; }
.scatter { width: 337px; }
.t-bars { font: italic 700 16.300px/16px "Lato", sans-serif; text-decoration: underline; padding: 0 0 0 4px; color: #222; white-space: nowrap; }
.barlist { margin-top: 36px; display: flex; flex-direction: column; gap: 14px; }
.barrow { display: flex; align-items: center; height: 48px; }
.blabel { width: 105px; text-align: right; font: 700 10.500px "Open Sans", sans-serif; color: #6b72c8; white-space: nowrap; margin-right: 8px; padding-top: 2px; }
.bar { height: 48px; background: #000; border: 1px solid #888; }
.bval { margin-left: 7px; font: 700 10.500px "Open Sans", sans-serif; color: #555; }
.kpi { height: 94px; text-align: center; }
.kpi-num { font: 700 54px/58px "Liberation Serif", serif; color: #a68a00; margin-top: 11px; }
.kpi-label { font: 700 14px/18px "Open Sans", sans-serif; color: #3a4fb0; margin-top: 1px; }
.slicer { padding: 4px 0 0 10px; overflow: hidden; }
.s-cust { height: 134px; margin: 0 -1px 0 1px; }
.s-promo { height: 118px; padding-top: 3px; }
.slicer h4 { font: 700 15px/22px "Lato", sans-serif; color: #111; margin-bottom: 1px; }
.slicer li { height: 26px; display: flex; align-items: center; gap: 6px; color: #444; }
.cb { width: 15px; height: 15px; border: 1px solid #777; flex: none; }
.thumb { position: absolute; right: 5px; width: 7px; background: #b0b0b0; }
.th-cust { top: 26px; height: 18px; }
.th-promo { top: 25px; height: 45px; }
.axis text { font: 700 10.500px "Open Sans", sans-serif; fill: #111; }
.axt { font: 700 11px "Open Sans", sans-serif; fill: #111; }
.t-scatter { font: italic 600 18.500px/22px "Liberation Serif", serif; text-decoration: underline; padding-left: 3px; color: #333; }
.sdots circle { fill: #1e90f5; fill-opacity: .95; }
.trend { width: 1121px; height: 189px; margin-top: 21px; }
.t-trend { font: italic 700 17px/20px "Liberation Mono", monospace; text-decoration: underline; text-align: center; color: #222; padding-left: 3px; margin-bottom: 2px; }
.grid path { stroke: #ccc; stroke-dasharray: 1 3; fill: none; }
.stems path { stroke: #9370cc; stroke-width: 3; fill: none; }
.tlabels text { font: 600 10.500px "Open Sans", sans-serif; fill: #111; }
.years text { font: 700 10px "DejaVu Sans", sans-serif; fill: #111; }
.pageline { margin: 18px 0 0 -22px; width: 1164px; border-top: 2px dotted #333; }

/* filters */
.filters { width: 250px; flex: none; background: #fff; border-left: 1px solid #bbb; color: #333; }
.f-head { height: 50px; display: flex; align-items: center; padding: 0 17px 2px 18px; }
.f-title { font-size: 17px; font-weight: 600; color: #333; margin: 0 auto 0 12px; }
.f-eye { margin-right: 26px; }
.f-search { margin: 7px 15px 0 9px; height: 41px; border: 1px solid #bbb; border-radius: 3px; display: flex; align-items: center; padding-left: 14px; gap: 14px; font-size: 15px; color: #444; }
.f-section { margin-top: 6px; border-top: 1px solid #bbb; padding: 20px 10px 0 9px; }
.f-row { display: flex; justify-content: space-between; height: 23px; padding-right: 5px; line-height: 23px; }
.f-row2 { margin-top: 32px; }
.more { font-size: 12px; margin-top: 1px; }
.f-drop { margin-top: 9px; height: 57px; border: 1px solid #333; border-radius: 2px; display: flex; align-items: center; justify-content: center; }

/* tabs */
.tabs { height: 44px; flex: none; background: #2a2a2a; border-bottom: 1px solid #555; display: flex; color: #e8e8e8; font-size: 14.300px; }
.tab-tools { width: 160px; flex: none; display: flex; align-items: flex-start; border-right: 1px solid #444; padding: 7px 0 0 13px; }
.device { width: 30px; height: 32px; position: relative; display: flex; justify-content: center; }
.device.on::after { content: ""; position: absolute; left: 0; right: 0; bottom: -3px; height: 4px; border-radius: 2px; background: #2aab95; }
.device + .device { margin-left: 24px; }
.nav-arrow { margin: 7px 0 0 21px; }
.nav-arrow:last-child { margin-left: 21px; }
.tab { display: flex; align-items: center; justify-content: center; border-right: 1px solid #444; height: 43px; padding-bottom: 3px; white-space: nowrap; }
.tab.active { width: 114px; position: relative; font-weight: 700; font-size: 14px; color: #fff; border-bottom: 5px solid #2aab95; padding-bottom: 0; }
.tab-x { position: absolute; right: 5px; top: 3px; font-size: 12px; }
.t-top { width: 215px; } .t-per { width: 111px; } .t-tbl { width: 121px; border-right: 0; }
.tab-add { width: 49px; height: 43px; background: #2aab95; color: #15332e; font-size: 26px; font-weight: 700; text-align: center; line-height: 40px; }

/* viz */
.viz { width: 226px; flex: none; border-left: 1px solid #aaa; border-right: 1px solid #666; position: relative; }
.p-head { display: flex; align-items: center; justify-content: space-between; height: 50px; padding: 0 13px 2px 10px; }
.p-title { font-size: 18.500px; font-weight: 600; color: #fff; }
.build { font-size: 13.500px; font-weight: 700; color: #f2f2f2; padding-left: 10px; line-height: 18px; margin-top: -1px; }
.build-tabs { display: flex; align-items: center; padding-left: 10px; margin-top: 5px; }
.bt { width: 40px; height: 40px; background: #2a2a2a; border-radius: 3px; display: flex; align-items: center; justify-content: center; }
.bt2 { margin-left: 48px; margin-top: -4px; }
.notch { height: 15px; border-bottom: 1px solid #666; position: relative; }
.notch::after { content: ""; position: absolute; left: 24px; top: 9px; width: 14px; height: 14px; background: #141414; border: solid #666; border-width: 1px 0 0 1px; transform: rotate(45deg); }
.vgrid { display: grid; grid-template-columns: repeat(6, 23px); column-gap: 12px; row-gap: 12px; padding: 14px 0 0 15px; position: relative; }
.vgrid svg { width: 23px; height: 23px; overflow: visible; }
.g { fill: none; stroke: #a6a6a6; stroke-width: 1.200; }
.l { fill: none; stroke: #5aa0e0; stroke-width: 1.200; }
.b { fill: #2b88d8; }
.bl { fill: #1a73c8; }
.f { fill: #6f6f6f; }
.v123 { fill: #4a9fe0; font: 400 10px "Open Sans", sans-serif; text-anchor: middle; }
.vr { fill: #3d93d8; font: 700 18px "Open Sans", sans-serif; text-anchor: middle; }
.vpy { fill: #3d93d8; font: 600 19px "Open Sans", sans-serif; text-anchor: middle; }
.vmore { color: #ddd; font-weight: 700; font-size: 14px; line-height: 14px; padding: 11px 0 0 15px; height: 25px; }
.wells { margin-top: 19px; border-top: 1px solid #b5b5b5; padding: 12px 6px 0 5px; }
.w-label { padding-left: 10px; line-height: 19px; color: #eee; }
.well { margin-top: 8px; height: 34px; border: 1px dashed #666; border-radius: 2px; padding-left: 13px; line-height: 32px; color: #f2f2f2; white-space: nowrap; }
.w-bold { margin: 14px 0 0 10px; font-weight: 700; line-height: 20px; color: #f2f2f2; }
.w-row { display: flex; justify-content: space-between; align-items: center; height: 20px; margin-top: 12px; padding: 0 20px 0 10px; color: #eee; }
.w-row2 { margin-top: 13px; }
.toggle { width: 40px; height: 20px; border-radius: 10px; display: flex; align-items: center; gap: 2px; font-size: 10.500px; padding: 0 5px; }
.toggle i { width: 10px; height: 10px; border-radius: 50%; flex: none; }
.toggle.off { border: 1px solid #999; color: #aaa; padding: 0 4px; }
.toggle.off i { background: #aaa; }
.toggle.on { background: #2aab95; color: #11443b; justify-content: space-between; }
.toggle.on i { background: #1c2a28; }
.well-black { margin-top: 13px; height: 32px; background: #000; padding-left: 9px; line-height: 30px; color: #fff; letter-spacing: -.1px; }

/* data */
.data { flex: 1; }
.d-search { margin: 7px 6px 0 5px; height: 30px; background: #1f1f1f; border: 1px solid #555; border-radius: 4px; display: flex; align-items: center; gap: 9px; padding-left: 15px; color: #8a8a8a; font-size: 15.500px; }
.tree { margin-top: 11px; padding-left: 20px; }
.tree li { height: 30px; display: flex; align-items: center; gap: 7px; color: #e6e6e6; }
.tree li span { margin-left: -3px; padding-left: 4px; }
.ts { fill: none; stroke: #ddd; stroke-width: 1; }

/* status */
.status { height: 30px; flex: none; border-top: 1px solid #555; display: flex; align-items: center; justify-content: space-between; padding: 0 6px 0 5px; color: #c0c0c0; font-size: 14.300px; }
.status-right { display: flex; align-items: center; }
.zm { font-size: 16px; width: 10px; }
.slider { width: 124px; height: 1px; background: #ccc; position: relative; margin-left: 1px; }
.sl-thumb { position: absolute; left: 39px; top: -6px; width: 5px; height: 13px; background: #ccc; }
.sl-tick { position: absolute; left: 61px; top: -3px; width: 1px; height: 7px; background: #ccc; }
.zp { font-size: 18px; font-weight: 600; width: 20px; text-align: center; margin-left: 2px; }
.zpct { margin-left: 11px; width: 44px; font-size: 14px; }
.fit { margin: 0 18px 0 9px; }
```

FILE: chart.js
```js
(function () {
  var NS = "http://www.w3.org/2000/svg";

  function circle(parent, x, y, r) {
    var c = document.createElementNS(NS, "circle");
    c.setAttribute("cx", x);
    c.setAttribute("cy", y);
    c.setAttribute("r", r);
    parent.appendChild(c);
  }

  // Seeded generator so the picture is the same on every load
  var seed = 20240117;
  function rnd() {
    seed = (seed * 1664525 + 1013904223) % 4294967296;
    return seed / 4294967296;
  }

  // Scatter: Profit vs Net Sales
  var scatter = document.getElementById("scatter-dots");
  var sparse = [[1147,315],[1140,322],[1114,353],[1098,372],[1093,378],[1088,384],[1075,400],[1072,403],
    [1066,410],[1062,415],[1051,427],[1044,435],[1040,439],[1034,447],[1029,451],[1026,457],[1023,461],
    [1017.5,467],[1010,476],[1002,484],[995.5,492],[990,499],[984,506],[977.5,514],[975,517],[970,523],
    [968,525],[961,533]];
  sparse.forEach(function (p) { circle(scatter, p[0], p[1], 4.5); });
  for (var i = 0; i <= 70; i++) {
    var t = i / 70;
    circle(scatter, 906 + t * 48, 600 - t * 60, 4.5);
  }
  circle(scatter, 933, 566, 5);

  // Trend: daily sales, lollipop style
  var stems = document.getElementById("trend-stems");
  var dots = document.getElementById("trend-dots");
  var base = 815;
  function stem(x, y) {
    var s = document.createElementNS(NS, "path");
    s.setAttribute("d", "M" + x.toFixed(1) + " " + base + "V" + y.toFixed(1));
    stems.appendChild(s);
  }
  function lolly(x, y) {
    stem(x, y);
    circle(dots, x.toFixed(1), y.toFixed(1), 3.8);
  }
  var peaks = [[98.6,746],[105.5,732],[231,732],[224.5,747],[256.7,741],[244,748],[254.5,752.6],[304,752],
    [329.4,756],[325,761],[345.5,760],[355,767],[380.7,747],[376,759],[479,741],[481.6,753],[454.5,756.6],
    [448.7,763],[472,760.7],[573,751.6],[574,763],[560.7,759],[594.6,754],[600,759],[665.6,753],[697,755],
    [736.5,753],[758,763],[798,760],[812,752],[828,750.6],[852,745.7],[876,716],[864,754.7],[888,752],
    [940.5,749],[1071,718],[1100.6,742.7],[1069,759],[1085.6,755.7],[1125.5,753],[1130,753],[1141,752],
    [1150,758.7],[1022,761],[134,768],[110,767],[120,768],[168,773],[206,775],[291,773],[316,767]];
  peaks.forEach(function (p) { lolly(p[0], p[1]); });
  for (var d = 0; d < 1460; d++) {
    var x = 92 + d * 0.741;
    var k = rnd();
    if (k < 0.42) lolly(x, 810 + rnd() * 7);        // the dense band of low days
    else if (k < 0.57) lolly(x, 790 + rnd() * 20);  // middling days
    else if (k < 0.68) lolly(x, 766 + rnd() * 24);  // good days
    else if (k < 0.84) stem(x, 775 + rnd() * 30);   // purple fill between the dots
  }
})();
```
